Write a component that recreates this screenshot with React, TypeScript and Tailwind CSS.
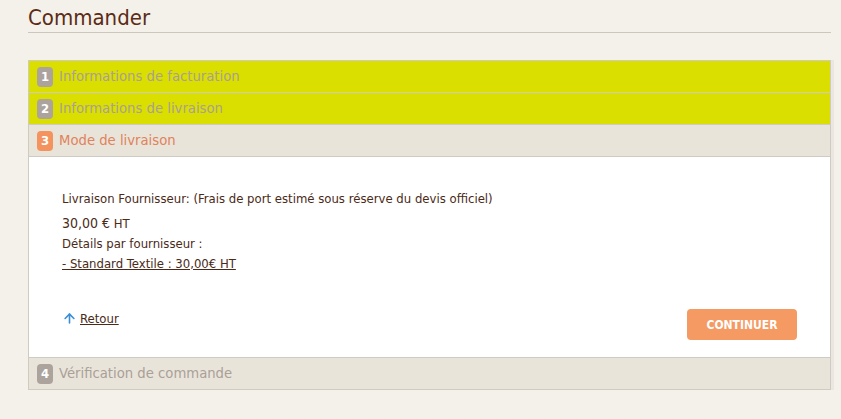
import { ArrowUp } from 'lucide-react';

const font = { fontFamily: 'Tahoma, "DejaVu Sans Condensed", "Open Sans", sans-serif' };

function Step({ n, label, tone }: { n: number; label: string; tone: 'done' | 'active' | 'todo' }) {
  const row =
    tone === 'done'
      ? 'bg-[#dadf00] border-b border-[#cfcbc2]'
      : 'bg-[#e9e4da] border-b border-[#cfcbc2]';
  const badge = tone === 'active' ? 'bg-[#f4935e]' : 'bg-[#aca39d]';
  const text = tone === 'active' ? 'text-[#e0825a]' : 'text-[#a9a097]';
  return (
    <div className={`flex h-[32px] items-center gap-[6px] pl-[8px] ${row}`}>
      <span
        className={`flex h-[20px] w-[16px] shrink-0 items-center justify-center rounded-[4px] text-[13px] leading-none font-bold text-white ${badge}`}
      >
        {n}
      </span>
      <span className={`text-[14.7px] ${text}`}>{label}</span>
    </div>
  );
}

export default function App() {
  return (
    <div className="min-h-[419px] w-[841px] bg-[#f4f1eb] pl-[28px] pr-[10px] pt-[6px]" style={font}>
      <h1 className="border-b border-[#cdc6bd] pb-[3px] text-[22px] leading-[23px] text-[#5b2c15]">Commander</h1>

      <div className="mt-[27px] w-[803px] border border-b-0 border-[#cfcbc2] shadow-[3px_0_0_#ebe7e0]">
        <Step n={1} label="Informations de facturation" tone="done" />
        <Step n={2} label="Informations de livraison" tone="done" />
        <Step n={3} label="Mode de livraison" tone="active" />

        <div className="border-b border-[#cfcbc2] bg-white px-[33px] pt-[32px] pb-[17px] text-[13px] text-[#4b2a18]">
          <p className="leading-[20px]">Livraison Fournisseur: (Frais de port estimé sous réserve du devis officiel)</p>
          <p className="mt-[4px] leading-[20px]">
            <span className="text-[14px]">30,00 €</span> HT
          </p>
          <p className="leading-[20px]">Détails par fournisseur :</p>
          <p className="leading-[20px] underline">- Standard Textile : 30,00€ HT</p>

          <div className="mt-[33px] flex items-start justify-between">
            <a href="#" className="mt-[2px] flex items-center gap-[3px] text-[#4b2a18] underline">
              <ArrowUp size={15} strokeWidth={2.6} className="text-[#3b8fd9]" />
              Retour
            </a>
            <button className="mt-[2px] h-[31px] w-[110px] rounded-[4px] bg-[#f59a63] text-[12px] font-bold text-white">
              CONTINUER
            </button>
          </div>
        </div>

        <Step n={4} label="Vérification de commande" tone="todo" />
      </div>
    </div>
  );
}
